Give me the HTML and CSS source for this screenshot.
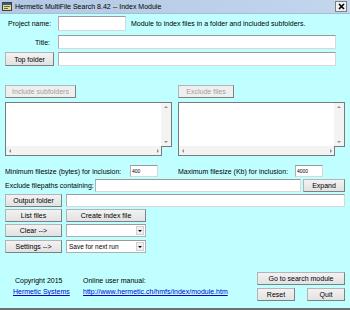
FILE: index.html
```html
<!DOCTYPE html>
<html lang="en">
<head>
  <meta charset="UTF-8" />
  <title>Hermetic MultiFile Search 8.42 -- Index Module</title>
  <link rel="stylesheet" href="styles.css">
</head>
<body>
  <div class="window">
    <div class="titlebar">
      <svg class="appicon" width="10" height="9" viewBox="0 0 10 9">
        <rect x="0.5" y="0.5" width="9" height="8" fill="#e8d890" stroke="#404040"/>
        <rect x="1" y="1" width="8" height="2" fill="#3a5a8a"/>
        <rect x="2" y="4" width="6" height="1" fill="#607040"/>
        <rect x="2" y="6" width="4" height="1" fill="#607040"/>
      </svg>
      <span class="title">Hermetic MultiFile Search 8.42 -- Index Module</span>
      <span class="close">
        <svg width="7" height="7" viewBox="0 0 7 7"><path d="M1 1 L6 6 M6 1 L1 6" stroke="#000" stroke-width="1.6"/></svg>
      </span>
    </div>

    <div class="content">
      <div class="row r1">
        <label class="lbl lbl-project">Project name:</label>
        <input class="field w-project" type="text">
        <span class="note">Module to index files in a folder and included subfolders.</span>
      </div>
      <div class="row r2">
        <label class="lbl lbl-title">Title:</label>
        <input class="field w-long" type="text">
      </div>
      <div class="row r3">
        <button class="btn b-top">Top folder</button>
        <input class="field w-long" type="text">
      </div>

      <div class="lists">
        <div class="listcol">
          <button class="btn disabled b-incl">Include subfolders</button>
          <div class="listbox">
            <div class="lb-main">
              <div class="lb-area"></div>
              <div class="vscroll"><span class="arr up"></span><span class="arr down"></span></div>
            </div>
            <div class="lb-bottom">
              <div class="hscroll"><span class="arr left"></span><span class="arr right"></span></div>
              <div class="corner"></div>
            </div>
          </div>
        </div>
        <div class="listcol">
          <button class="btn disabled b-excl">Exclude files</button>
          <div class="listbox">
            <div class="lb-main">
              <div class="lb-area"></div>
              <div class="vscroll"><span class="arr up"></span><span class="arr down"></span></div>
            </div>
            <div class="lb-bottom">
              <div class="hscroll"><span class="arr left"></span><span class="arr right"></span></div>
              <div class="corner"></div>
            </div>
          </div>
        </div>
      </div>

      <div class="row r-size">
        <div class="sizecol">
          <label class="lbl">Minimum filesize (bytes) for inclusion:</label>
          <input class="field small" type="text" value="400">
        </div>
        <div class="sizecol">
          <label class="lbl">Maximum filesize (Kb) for inclusion:</label>
          <input class="field small" type="text" value="4000">
        </div>
      </div>

      <div class="row r-excl">
        <label class="lbl">Exclude filepaths containing:</label>
        <input class="field w-excl" type="text">
        <button class="btn b-expand">Expand</button>
      </div>

      <div class="row r-act">
        <button class="btn b-side">Output folder</button>
        <input class="field w-out" type="text">
      </div>
      <div class="row r-act">
        <button class="btn b-side">List files</button>
        <button class="btn b-create">Create index file</button>
      </div>
      <div class="row r-act">
        <button class="btn b-side">Clear --&gt;</button>
        <div class="select"><span class="sel-text"></span><span class="sel-arrow"></span></div>
      </div>
      <div class="row r-act r-settings">
        <button class="btn b-side">Settings --&gt;</button>
        <div class="select"><span class="sel-text">Save for next run</span><span class="sel-arrow"></span></div>
      </div>

      <div class="footer">
        <div class="fcol fcol-copy">
          <span>Copyright 2015</span>
          <a href="#">Hermetic Systems</a>
        </div>
        <div class="fcol fcol-manual">
          <span>Online user manual:</span>
          <a href="#">http://www.hermetic.ch/hmfs/index/module.htm</a>
        </div>
        <div class="fbtns">
          <button class="btn b-search">Go to search module</button>
          <div class="fbtn-row">
            <button class="btn b-small">Reset</button>
            <button class="btn b-small">Quit</button>
          </div>
        </div>
      </div>
    </div>
  </div>
</body>
</html>
```

FILE: styles.css
```css
body {
  margin: 0;
  font-family: 'Liberation Sans', Arial, sans-serif;
  font-size: 7px;
  color: #000;
}

.window {
  width: 350px;
  height: 310px;
  background: #bfffff;
  box-sizing: border-box;
  border-bottom: 2px solid #707070;
  overflow: hidden;
}

.titlebar {
  height: 13px;
  display: flex;
  align-items: center;
  padding: 0 3px 0 2px;
  background: linear-gradient(to right, #b3c8e2, #bcd0ea 60%, #c3d6ee);
  border-bottom: 1px solid #a8bcd4;
}

.appicon {
  margin-right: 3px;
}

.title {
  flex: 1;
  font-size: 7px;
  color: #000;
}

.close {
  width: 10px;
  height: 9px;
  display: flex;
  align-items: center;
  justify-content: center;
  background: #f0f0f0;
  border: 1px solid #808080;
}

.content {
  padding: 2px 5px 0 5px;
}

.row {
  display: flex;
  align-items: center;
}

.lbl {
  white-space: nowrap;
}

.field {
  box-sizing: border-box;
  height: 14px;
  border: 1px solid #d8d8d8;
  border-top-color: #9a9a9a;
  border-left-color: #b0b0b0;
  background: #fff;
  font-family: inherit;
  font-size: 6px;
  padding: 0 1px;
  margin: 0;
}

.btn {
  box-sizing: border-box;
  height: 14px;
  padding: 0;
  margin: 0;
  font-family: inherit;
  font-size: 7px;
  color: #000;
  background: linear-gradient(#f2f2f2, #e2e2e2);
  border: 1px solid #b4b4b4;
  border-right-color: #808080;
  border-bottom-color: #808080;
}

.btn.disabled {
  color: #a0a0a0;
  background: #efefef;
}

.r1 {
  height: 15px;
}

.lbl-project {
  margin-left: 3px;
  width: 50px;
}

.w-project {
  width: 68px;
  height: 15px;
}

.note {
  margin-left: 5px;
}

.r2 {
  margin-top: 4px;
}

.lbl-title {
  width: 45px;
  text-align: right;
  margin-right: 8px;
}

.w-long {
  width: 278px;
}

.r3 {
  margin-top: 3px;
}

.b-top {
  width: 49px;
  margin-right: 4px;
}

.lists {
  display: flex;
  gap: 6px;
  margin-top: 19px;
}

.listcol {
  width: 167px;
  display: flex;
  flex-direction: column;
  align-items: flex-start;
}

.b-incl {
  width: 71px;
  height: 13px;
}

.b-excl {
  width: 56px;
  height: 13px;
}

.listbox {
  margin-top: 4px;
  width: 167px;
  height: 54px;
  display: flex;
  flex-direction: column;
}

.lb-main {
  flex: 1;
  display: flex;
  border: 1px solid #7a7a7a;
  border-bottom: none;
  border-right: none;
}

.lb-area {
  flex: 1;
  background: #fff;
}

.vscroll {
  width: 10px;
  background: #f3f3f3;
  border-right: 1px solid #7a7a7a;
  display: flex;
  flex-direction: column;
  justify-content: space-between;
  align-items: center;
  padding: 3px 0;
}

.lb-bottom {
  height: 10px;
  display: flex;
}

.hscroll {
  flex: 1;
  background: #f3f3f3;
  border: 1px solid #7a7a7a;
  border-top: none;
  border-right: none;
  display: flex;
  justify-content: space-between;
  align-items: center;
  padding: 0 3px;
}

.corner {
  width: 11px;
  border-top: 1px solid #7a7a7a;
  border-left: 1px solid #7a7a7a;
  box-sizing: border-box;
  margin-left: -1px;
}

.arr {
  width: 0;
  height: 0;
  border: 2px solid transparent;
}

.arr.up { border-bottom-color: #909090; border-top-width: 0; }
.arr.down { border-top-color: #909090; border-bottom-width: 0; }
.arr.left { border-right-color: #909090; border-left-width: 0; }
.arr.right { border-left-color: #909090; border-right-width: 0; }

.r-size {
  margin-top: 9px;
  gap: 6px;
}

.sizecol {
  width: 167px;
  display: flex;
  align-items: center;
}

.sizecol .lbl {
  width: 125px;
}

.sizecol:last-child .lbl {
  width: 117px;
}

.field.small {
  width: 28px;
  height: 12px;
  font-size: 5px;
}

.r-excl {
  margin-top: 2px;
}

.r-excl .lbl {
  width: 90px;
}

.w-excl {
  width: 206px;
  height: 13px;
}

.b-expand {
  width: 42px;
  height: 13px;
  margin-left: 2px;
}

.r-act {
  margin-top: 2px;
  gap: 4px;
}

.b-side {
  width: 57px;
  height: 13px;
}

.w-out {
  width: 279px;
  height: 13px;
}

.b-create {
  width: 80px;
  height: 13px;
}

.select {
  box-sizing: border-box;
  width: 80px;
  height: 13px;
  display: flex;
  align-items: center;
  background: #fff;
  border: 1px solid #b0b0b0;
  border-top-color: #9a9a9a;
}

.sel-text {
  flex: 1;
  padding-left: 2px;
  font-size: 6.5px;
}

.sel-arrow {
  width: 8px;
  height: 9px;
  margin-right: 1px;
  background: #f0f0f0;
  border: 1px solid #d0d0d0;
  box-sizing: border-box;
  display: flex;
  align-items: center;
  justify-content: center;
}

.sel-arrow::after {
  content: "";
  border: 2px solid transparent;
  border-top: 2px solid #000;
  border-bottom: none;
}

.r-settings {
  margin-top: 3px;
}

.footer {
  display: flex;
  align-items: flex-end;
  margin-top: 19px;
}

.fcol {
  display: flex;
  flex-direction: column;
  gap: 4px;
  padding-bottom: 6px;
}

.fcol-copy {
  width: 78px;
  padding-left: 8px;
  box-sizing: border-box;
}

.fcol-copy span {
  padding-left: 2px;
}

.fcol-manual {
  width: 174px;
}

.fcol a {
  color: #0000d0;
  text-decoration: underline;
}

.fbtns {
  display: flex;
  flex-direction: column;
  gap: 3px;
}

.b-search {
  width: 88px;
  height: 13px;
}

.fbtn-row {
  display: flex;
  justify-content: space-between;
}

.b-small {
  width: 38px;
  height: 13px;
}
```
